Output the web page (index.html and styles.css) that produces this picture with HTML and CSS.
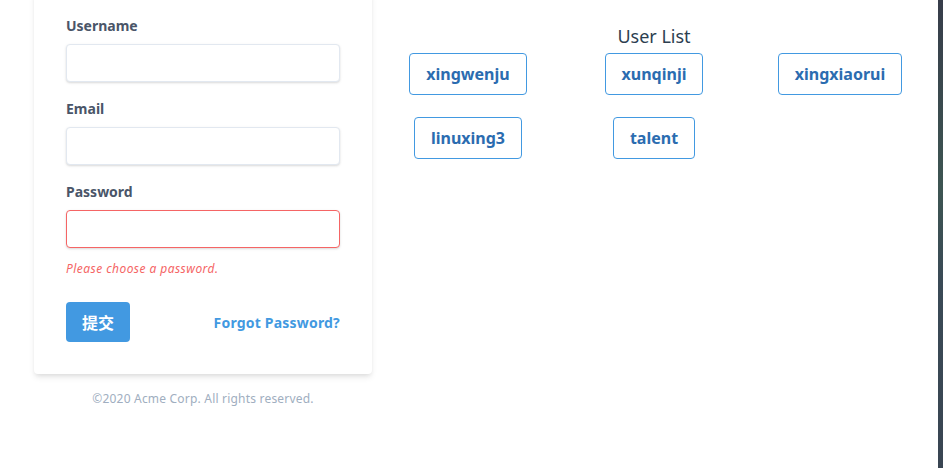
FILE: index.html
```html
<!DOCTYPE html>
<html lang="en">
<head>
<meta charset="utf-8">
<title>Login</title>
<link rel="stylesheet" href="styles.css">
</head>
<body>
<div class="page">
  <div class="left">
    <form class="card">
      <div class="field">
        <label class="label">Username</label>
        <input class="input" type="text">
      </div>
      <div class="field">
        <label class="label">Email</label>
        <input class="input" type="text">
      </div>
      <div class="field field-last">
        <label class="label">Password</label>
        <input class="input input-error" type="password">
        <p class="error">Please choose a password.</p>
      </div>
      <div class="actions">
        <button class="submit" type="button">提交</button>
        <a class="forgot" href="#">Forgot Password?</a>
      </div>
    </form>
    <p class="footer">©2020 Acme Corp. All rights reserved.</p>
  </div>
  <div class="right">
    <h2 class="title">User List</h2>
    <div class="users">
      <button class="user" type="button">xingwenju</button>
      <button class="user" type="button">xunqinji</button>
      <button class="user" type="button">xingxiaorui</button>
      <button class="user" type="button">linuxing3</button>
      <button class="user" type="button">talent</button>
    </div>
  </div>
</div>
<div class="edge"></div>
</body>
</html>
```

FILE: styles.css
```css
html, body {
  margin: 0;
  padding: 0;
  height: 100%;
}
body {
  display: flex;
  background: #fff;
  font-family: "Noto Sans", "Open Sans", "Noto Sans CJK SC", sans-serif;
  line-height: 1.5;
  overflow: hidden;
}
.page {
  flex: 1;
  display: flex;
  align-items: flex-start;
}
.left {
  margin-left: 34px;
  width: 338px;
}
.card {
  margin: -9px 0 16px;
  background: #fff;
  border-radius: 4px;
  box-shadow: 0 4px 6px -1px rgba(0,0,0,0.1), 0 2px 4px -1px rgba(0,0,0,0.06);
  padding: 24px 32px 32px;
}
.field {
  margin-bottom: 16px;
}
.field-last {
  margin-bottom: 24px;
}
.label {
  display: block;
  color: #4a5568;
  font-size: 14px;
  line-height: 21px;
  font-weight: 700;
  margin-bottom: 8px;
}
.input {
  display: block;
  box-sizing: border-box;
  width: 100%;
  height: 38px;
  border: 1px solid #e2e8f0;
  border-radius: 4px;
  box-shadow: 0 1px 3px 0 rgba(0,0,0,0.1), 0 1px 2px 0 rgba(0,0,0,0.06);
  padding: 8px 12px;
  font: inherit;
  outline: none;
}
.input-error {
  border-color: #f56565;
  margin-bottom: 12px;
}
.error {
  margin: 0;
  color: #f56565;
  font-size: 12px;
  line-height: 18px;
  font-style: italic;
  letter-spacing: 0.45px;
}
.actions {
  display: flex;
  align-items: center;
  justify-content: space-between;
}
.submit {
  width: 64px;
  height: 40px;
  border: 0;
  border-radius: 4px;
  background: #4299e1;
  color: #fff;
  font-family: "Noto Sans CJK SC", sans-serif;
  font-weight: 700;
  font-size: 16px;
  padding: 0;
}
.forgot {
  color: #4299e1;
  font-weight: 700;
  font-size: 14px;
  text-decoration: none;
  letter-spacing: 0.2px;
}
.footer {
  margin: 0;
  text-align: center;
  color: #a0aec0;
  font-size: 12px;
  line-height: 18px;
  letter-spacing: 0.2px;
}
.right {
  margin-left: 3px;
  width: 558px;
}
.title {
  margin: 0;
  padding-top: 24px;
  text-align: center;
  font-size: 18px;
  line-height: 24px;
  font-weight: 400;
  color: #2c3e50;
}
.users {
  margin-top: 5px;
  display: grid;
  grid-template-columns: repeat(3, 186px);
  row-gap: 22px;
  justify-items: center;
}
.user {
  height: 42px;
  padding: 0 16px;
  background: #fff;
  border: 1px solid #4299e1;
  border-radius: 4px;
  color: #2b6cb0;
  font-family: "Noto Sans", "Open Sans", sans-serif;
  font-weight: 700;
  font-size: 16px;
}
.edge {
  width: 5px;
  height: 100%;
  background: linear-gradient(#373d4a, #3d5552 40%, #3a4a56 60%, #394552);
}
```
